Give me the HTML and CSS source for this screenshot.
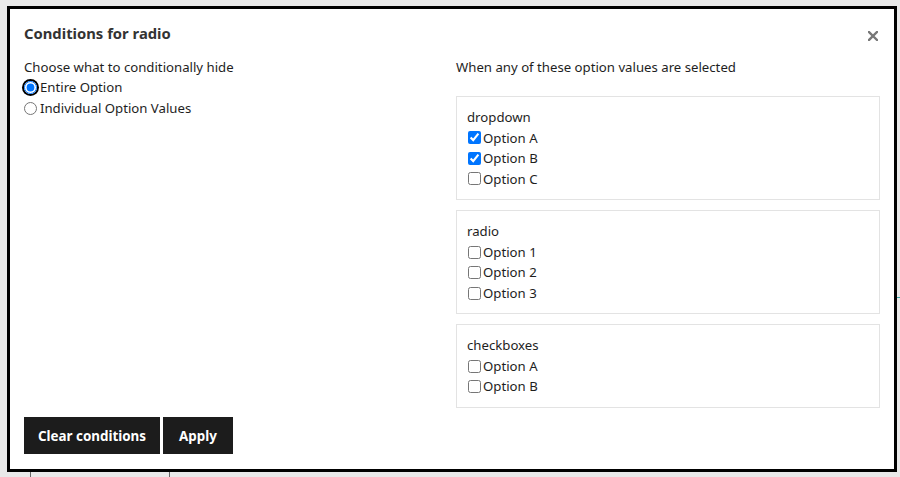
FILE: index.html
```html
<!DOCTYPE html>
<html lang="en">
<head>
<meta charset="utf-8">
<title>Conditions for radio</title>
<link rel="stylesheet" href="styles.css">
</head>
<body>
<div class="page">
  <div class="page-row">
    <div class="page-cell cell-a"></div>
    <div class="page-cell cell-b"></div>
  </div>
</div>
<span class="edge-mark"></span>
<div class="modal" role="dialog">
  <div class="modal-header">
    <h2 class="modal-title">Conditions for radio</h2>
    <button class="close" aria-label="Close">
      <svg width="10" height="10" viewBox="0 0 10 10"><path d="M1 1L9 9M9 1L1 9" stroke="#777" stroke-width="2.4" stroke-linecap="square"/></svg>
    </button>
  </div>
  <div class="modal-body">
    <div class="col">
      <div class="col-heading">Choose what to conditionally hide</div>
      <label class="radio-row"><span class="focus-ring"><input type="radio" name="hide" checked></span>Entire Option</label>
      <label class="radio-row"><input type="radio" name="hide"> Individual Option Values</label>
    </div>
    <div class="col">
      <div class="col-heading">When any of these option values are selected</div>
      <div class="cards">
        <div class="card">
          <div class="card-title">dropdown</div>
          <label class="check-row"><input type="checkbox" checked> Option A</label>
          <label class="check-row"><input type="checkbox" checked> Option B</label>
          <label class="check-row"><input type="checkbox"> Option C</label>
        </div>
        <div class="card">
          <div class="card-title">radio</div>
          <label class="check-row"><input type="checkbox"> Option 1</label>
          <label class="check-row"><input type="checkbox"> Option 2</label>
          <label class="check-row"><input type="checkbox"> Option 3</label>
        </div>
        <div class="card">
          <div class="card-title">checkboxes</div>
          <label class="check-row"><input type="checkbox"> Option A</label>
          <label class="check-row"><input type="checkbox"> Option B</label>
        </div>
      </div>
    </div>
  </div>
  <div class="modal-footer">
    <button class="btn btn-clear">Clear conditions</button>
    <button class="btn btn-apply">Apply</button>
  </div>
</div>
</body>
</html>
```

FILE: styles.css
```css
html, body {
  margin: 0;
  padding: 0;
  height: 100%;
}
body {
  background: #e9e9e9;
  font-family: "Noto Sans", "Liberation Sans", sans-serif;
  color: #1e1e1e;
  font-size: 13.2px;
  overflow: hidden;
}
.page {
  height: 100%;
  display: flex;
  flex-direction: column;
  justify-content: flex-end;
}
.page-row {
  display: flex;
  height: 6px;
  margin-left: 30px;
}
.page-cell {
  border-left: 1px solid #666;
}
.cell-a { width: 138px; }
.cell-b { width: 200px; }
.edge-mark {
  position: absolute;
  left: 897px;
  top: 297px;
  width: 3px;
  height: 1px;
  background: #3aa6a6;
}
.modal {
  position: absolute;
  left: 7px;
  top: 6px;
  width: 890px;
  height: 466px;
  box-sizing: border-box;
  border: 3px solid #000;
  background: #fff;
  padding: 14px 14px 15px 14px;
  display: flex;
  flex-direction: column;
}
.modal-header {
  display: flex;
  justify-content: space-between;
  align-items: center;
  height: 20px;
}
.modal-title {
  margin: 0;
  font-size: 14.8px;
  line-height: 20px;
  font-weight: 700;
  color: #333;
}
.close {
  border: 0;
  background: none;
  padding: 0;
  margin: 5px 2px 0 0;
  width: 10px;
  height: 10px;
  display: flex;
}
.modal-body {
  margin-top: 14px;
  display: grid;
  grid-template-columns: 1fr 424px;
  column-gap: 16px;
  flex: 1;
}
.col-heading {
  line-height: 20px;
}
.radio-row {
  display: flex;
  align-items: center;
  line-height: 21px;
}
.radio-row input {
  margin: 0 3px 0 0;
  width: 13px;
  height: 13px;
}
.focus-ring {
  display: inline-flex;
  border-radius: 50%;
  box-shadow: 0 0 0 2px #000;
  margin-right: 3px;
}
.focus-ring input {
  margin: 0;
}
.cards {
  margin-top: 19px;
  display: flex;
  flex-direction: column;
  gap: 10px;
}
.card {
  border: 1px solid #e3e3e3;
  padding: 10px 10px;
}
.card-title {
  line-height: 20.55px;
}
.check-row {
  display: flex;
  align-items: center;
  line-height: 20.55px;
}
.check-row input {
  margin: 0 2px 0 1px;
  width: 13px;
  height: 13px;
}
.modal-footer {
  display: flex;
  gap: 3px;
}
.btn {
  background: #1c1c1c;
  color: #fff;
  border: 0;
  font-family: inherit;
  font-size: 13.4px;
  font-weight: 700;
  height: 37px;
  padding: 0;
  white-space: nowrap;
  text-align: center;
}
.btn-clear {
  width: 136px;
}
.btn-apply {
  width: 70px;
}
```
